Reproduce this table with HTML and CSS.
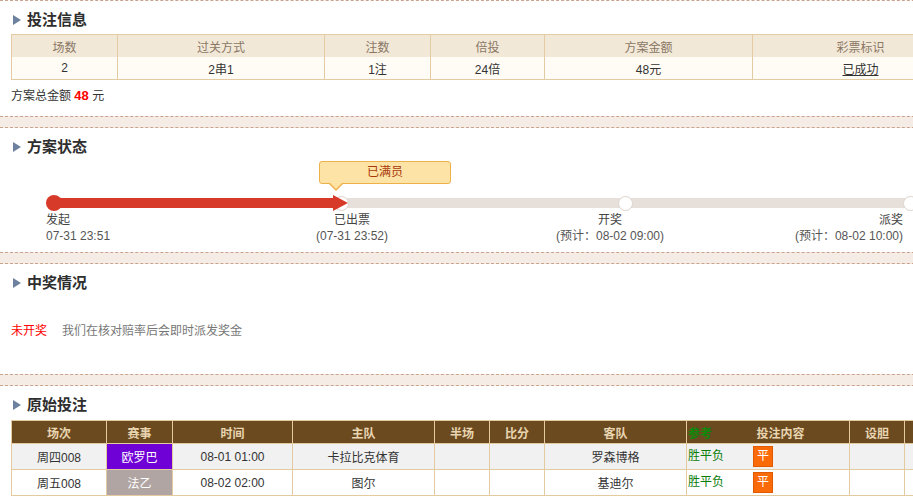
FILE: index.html
```html
<!DOCTYPE html>
<html lang="zh-CN">
<head>
<meta charset="utf-8">
<title>方案详情</title>
<link rel="stylesheet" href="styles.css">
</head>
<body>
<div class="page">
  <div class="inner">
  <section class="sec sec-info">
    <h2 class="sec-title"><i class="tri"></i>投注信息</h2>
    <table class="info">
      <colgroup>
        <col class="c106"><col class="c207"><col class="c106"><col class="c114"><col class="c208"><col class="c216">
      </colgroup>
      <thead>
        <tr><th>场数</th><th>过关方式</th><th>注数</th><th>倍投</th><th>方案金额</th><th>彩票标识</th></tr>
      </thead>
      <tbody>
        <tr><td>2</td><td>2串1</td><td>1注</td><td>24倍</td><td>48元</td><td><a class="ok">已成功</a></td></tr>
      </tbody>
    </table>
    <p class="total">方案总金额 <b>48</b> 元</p>
  </section>
  <div class="sep"></div>
  <section class="sec sec-status">
    <h2 class="sec-title"><i class="tri"></i>方案状态</h2>
    <div class="tip">已满员</div>
    <div class="track">
      <span class="dot"></span>
      <span class="fill"></span>
      <span class="node node-first"></span>
      <span class="head"></span>
      <span class="node node-gap"></span>
      <span class="node node-gap"></span>
    </div>
    <div class="labels">
      <div class="lab lab1"><div class="ln">发起</div><div class="lt">07-31 23:51</div></div>
      <div class="lab lab2"><div class="ln">已出票</div><div class="lt">(07-31 23:52)</div></div>
      <div class="lab lab3"><div class="ln">开奖</div><div class="lt">(预计：08-02 09:00)</div></div>
      <div class="lab lab4"><div class="ln">派奖</div><div class="lt">(预计：08-02 10:00)</div></div>
    </div>
  </section>
  <div class="sep"></div>
  <section class="sec sec-prize">
    <h2 class="sec-title"><i class="tri"></i>中奖情况</h2>
    <p class="prize"><span class="red">未开奖</span><span class="note">我们在核对赔率后会即时派发奖金</span></p>
  </section>
  <div class="sep"></div>
  <section class="sec sec-orig">
    <h2 class="sec-title"><i class="tri"></i>原始投注</h2>
    <table class="orig">
      <colgroup>
        <col class="w95"><col class="w66"><col class="w120"><col class="w142"><col class="w55"><col class="w55"><col class="w142"><col class="w163"><col class="w55"><col class="w60">
      </colgroup>
      <thead>
        <tr><th>场次</th><th>赛事</th><th>时间</th><th>主队</th><th>半场</th><th>比分</th><th>客队</th><th><span class="ref">参考</span>投注内容</th><th>设胆</th><th></th></tr>
      </thead>
      <tbody>
        <tr class="r1"><td>周四008</td><td class="lg lg-uel">欧罗巴</td><td>08-01 01:00</td><td>卡拉比克体育</td><td></td><td></td><td>罗森博格</td><td class="bet"><span class="play">胜平负</span><span class="pick">平</span></td><td></td><td></td></tr>
        <tr class="r2"><td>周五008</td><td class="lg lg-fr2">法乙</td><td>08-02 02:00</td><td>图尔</td><td></td><td></td><td>基迪尔</td><td class="bet"><span class="play">胜平负</span><span class="pick">平</span></td><td></td><td></td></tr>
      </tbody>
    </table>
  </section>
  </div>
</div>
</body>
</html>
```

FILE: styles.css
```css
html, body {
  margin: 0;
  padding: 0;
  background: #fff;
  overflow: hidden;
}
body {
  font-family: "Liberation Sans", "Noto Sans CJK SC", sans-serif;
  font-size: 12px;
  color: #333;
}
.page {
  width: 100%;
  overflow: hidden;
}
.inner {
  width: 980px;
}
.sec-info {
  border-top: 1px dashed #caa38e;
  padding-bottom: 12px;
}
.sep {
  height: 10px;
  background: #f5ece5;
  border-top: 1px dashed #caa38e;
  border-bottom: 1px dashed #caa38e;
}
.sec-title {
  margin: 0;
  padding: 5px 0 0 13px;
  height: 27px;
  line-height: 27px;
  font-size: 15px;
  font-weight: bold;
  color: #2e2e2e;
  display: flex;
  align-items: center;
}
.tri {
  width: 0;
  height: 0;
  border-left: 8px solid #6e819e;
  border-top: 5px solid transparent;
  border-bottom: 5px solid transparent;
  margin-right: 6px;
}

/* info table */
table {
  border-collapse: collapse;
  table-layout: fixed;
  margin-left: 11px;
}
.info {
  width: 957px;
  margin-top: 1px;
  border: 1px solid #e4cba3;
}
.info th, .info td {
  border-left: 1px solid #e4cba3;
  border-right: 1px solid #e4cba3;
  text-align: center;
  padding: 0;
  font-weight: normal;
}
.info th {
  background: #f2e8d8;
  color: #8a7765;
  height: 22px;
}
.info td {
  background: #fffcf5;
  height: 22px;
  color: #333;
}
.c106 { width: 106px; }
.c207 { width: 207px; }
.c114 { width: 114px; }
.c208 { width: 208px; }
.c216 { width: 216px; }
.ok {
  color: #333;
  text-decoration: underline;
}
.total {
  margin: 8px 0 0 11px;
  line-height: 16px;
  color: #333;
}
.total b {
  color: #f00;
  font-size: 13px;
}

/* status */
.sec-status {
  padding-bottom: 8px;
}
.tip {
  position: relative;
  margin: 1px 0 0 319px;
  width: 130px;
  height: 21px;
  line-height: 21px;
  border: 1px solid #eeb049;
  border-radius: 3px;
  background: #fee3a6;
  color: #a8380a;
  text-align: center;
}
.tip::before {
  content: "";
  position: absolute;
  left: 9px;
  top: 22px;
  border-top: 7px solid #eeb049;
  border-left: 7px solid transparent;
  border-right: 7px solid transparent;
}
.tip::after {
  content: "";
  position: absolute;
  left: 10px;
  top: 21px;
  border-top: 6px solid #fee3a6;
  border-left: 6px solid transparent;
  border-right: 6px solid transparent;
}
.track {
  margin: 11px 0 0 46px;
  width: 900px;
  height: 16px;
  display: flex;
  align-items: center;
  background: linear-gradient(#e7dfd9, #e7dfd9) no-repeat 8px 3px / 100% 10px;
}
.dot {
  flex: none;
  width: 16px;
  height: 16px;
  border-radius: 50%;
  background: #d83a29;
}
.fill {
  flex: none;
  margin-left: -8px;
  width: 279px;
  height: 10px;
  background: #d83a29;
}
.node {
  flex: none;
  width: 13px;
  height: 13px;
  border: 1px solid #ddd3cc;
  border-radius: 50%;
  background: #fff;
}
.node-first {
  margin-left: 1px;
}
.node-gap {
  margin-left: 270px;
}
.head {
  flex: none;
  width: 0;
  height: 0;
  margin-left: -16px;
  border-left: 15px solid #d83a29;
  border-top: 8px solid transparent;
  border-bottom: 8px solid transparent;
}
.labels {
  display: flex;
  margin: 1px 0 0 46px;
  line-height: 16px;
}
.lab { flex: none; }
.lab1 { width: 206px; text-align: left; }
.lab2 { width: 200px; text-align: center; }
.lab3 { width: 316px; text-align: center; }
.lab4 { width: 135px; text-align: right; }
.ln { color: #444; }
.lt { color: #555; }

/* prize */
.sec-prize {
  padding-bottom: 35px;
}
.prize {
  margin: 27px 0 0 11px;
  line-height: 16px;
}
.red { color: #f00; }
.note {
  color: #777;
  margin-left: 15px;
}

/* original bets */
.orig {
  width: 953px;
  margin-top: 2px;
  border: 1px solid #e4cb9f;
}
.orig th, .orig td {
  border: 1px solid #e4cb9f;
  padding: 0;
  text-align: center;
}
.orig th {
  background: #6b4a20;
  color: #e8d5b0;
  font-weight: bold;
  height: 22px;
}
.orig td {
  height: 25px;
  color: #333;
}
.r1 td { background: #f1f1f1; }
.r2 td { background: #fff; }
.orig td.lg { color: #fff; }
.orig td.lg-uel { background: #6f00d6; }
.orig td.lg-fr2 { background: #b1a5a3; }
.w95 { width: 95px; }
.w66 { width: 66px; }
.w120 { width: 120px; }
.w142 { width: 142px; }
.w55 { width: 55px; }
.w163 { width: 163px; }
.w60 { width: 60px; }
.ref {
  float: left;
  color: #0b8a0b;
  margin-left: 1px;
}
.orig td.bet {
  text-align: left;
  padding-left: 1px;
}
.play {
  color: #0a7d0a;
}
.pick {
  display: inline-block;
  vertical-align: middle;
  margin-left: 29px;
  width: 18px;
  height: 19px;
  line-height: 19px;
  text-align: center;
  border: 1px solid #e05a00;
  background: #fb6a09;
  color: #fff;
}
```
